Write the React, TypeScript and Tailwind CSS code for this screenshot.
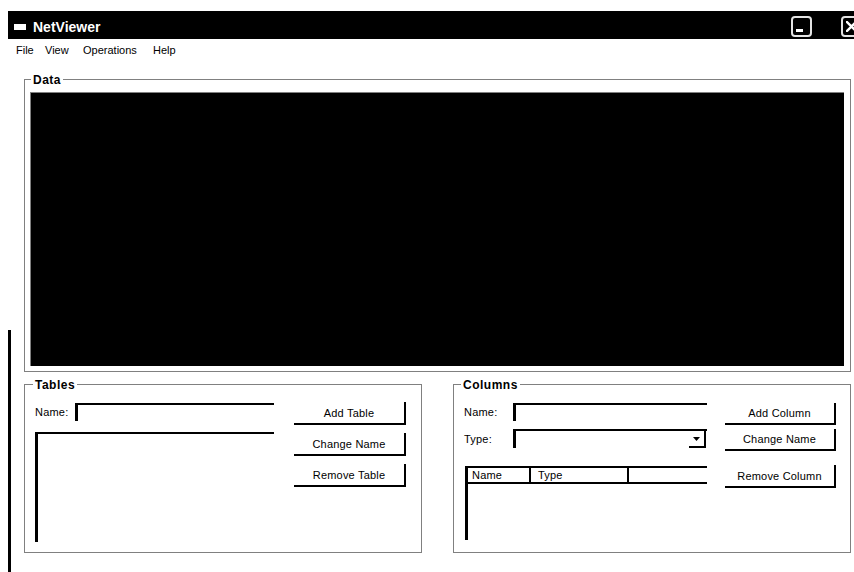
import React from "react";

type GroupProps = {
  title: string;
  className: string;
  labelClass: string;
  children: React.ReactNode;
};

function Group({ title, className, labelClass, children }: GroupProps) {
  return (
    <div className={`relative border border-[#808080] ${className}`}>
      <span
        className={`absolute top-[-7px] bg-white px-[2px] text-[12px] font-bold leading-[14px] tracking-[0.5px] text-black ${labelClass}`}
      >
        {title}
      </span>
      {children}
    </div>
  );
}

function RaisedButton({ label, className }: { label: string; className: string }) {
  return (
    <div
      className={`flex items-center justify-center border-r-2 border-b-2 border-black text-[11px] leading-[14px] tracking-[0.2px] text-black ${className}`}
    >
      {label}
    </div>
  );
}

function Field({ className }: { className: string }) {
  return <div className={`border-t-2 border-l-[3px] border-black bg-white ${className}`} />;
}

function TitleBar() {
  return (
    <div className="flex h-[28px] w-[854px] shrink-0 items-center bg-black pt-[4px]">
      <div className="ml-[6px] h-[6px] w-[12px] bg-white" />
      <span className="ml-[7px] text-[14px] font-bold leading-[16px] text-white">NetViewer</span>
      <div className="mb-[2px] ml-auto flex h-[21px] w-[21px] items-end self-end rounded-[4px] border-2 border-[#e4e4e4] pb-[3px] pl-[3px]">
        <div className="h-[3px] w-[7px] bg-white" />
      </div>
      <div className="mb-[2px] ml-[29px] flex h-[21px] w-[21px] shrink-0 items-center justify-center self-end rounded-[4px] border-2 border-[#e4e4e4]">
        <svg width="11" height="11" viewBox="0 0 11 11">
          <path d="M1 1 L10 10 M10 1 L1 10" stroke="white" strokeWidth="2.4" strokeLinecap="square" />
        </svg>
      </div>
    </div>
  );
}

function MenuBar() {
  return (
    <div className="flex h-[22px] items-center pl-[5px] text-[11px] leading-[14px] text-black">
      <span className="w-[29px]">File</span>
      <span className="w-[38px]">View</span>
      <span className="w-[70px]">Operations</span>
      <span>Help</span>
    </div>
  );
}

function TablesPanel() {
  return (
    <Group title="Tables" className="flex h-[169px] w-[398px] pt-[17px] pl-[10px]" labelClass="left-[8px]">
      <div className="flex flex-col pt-[1px]">
        <div className="flex h-[18px] items-center">
          <span className="w-[40px] text-[11px] leading-[14px] tracking-[0.2px] text-black">Name:</span>
          <Field className="h-[18px] w-[199px]" />
        </div>
        <Field className="mt-[11px] h-[110px] w-[239px]" />
      </div>
      <div className="ml-[20px] flex flex-col gap-[8px]">
        <RaisedButton label="Add Table" className="h-[23px] w-[112px]" />
        <RaisedButton label="Change Name" className="h-[23px] w-[112px]" />
        <RaisedButton label="Remove Table" className="h-[23px] w-[112px]" />
      </div>
    </Group>
  );
}

function ColumnsPanel() {
  return (
    <Group title="Columns" className="flex h-[169px] w-[398px] pt-[18px] pl-[10px]" labelClass="left-[7px]">
      <div className="flex flex-col">
        <div className="flex h-[18px] items-center">
          <span className="w-[49px] text-[11px] leading-[14px] tracking-[0.2px] text-black">Name:</span>
          <Field className="h-[18px] w-[194px]" />
        </div>
        <div className="mt-[8px] flex h-[19px] items-center">
          <span className="w-[49px] text-[11px] leading-[14px] tracking-[0.2px] text-black">Type:</span>
          <div className="flex h-[19px] w-[194px] justify-end border-t-2 border-l-[3px] border-black pr-[1px]">
            <div className="flex h-[17px] w-[17px] items-center justify-center border-r-2 border-b-2 border-black">
              <svg width="7" height="4" viewBox="0 0 7 4">
                <path d="M0 0 H7 L3.5 4 Z" fill="black" />
              </svg>
            </div>
          </div>
        </div>
        <div className="mt-[18px] ml-[1px] flex h-[74px] w-[242px] flex-col border-t-2 border-l-[3px] border-black">
          <div className="flex h-[16px] border-b-2 border-black text-[11px] leading-[14px] tracking-[0.2px] text-black">
            <div className="w-[63px] border-r-2 border-black pl-[4px]">Name</div>
            <div className="w-[98px] border-r-2 border-black pl-[7px]">Type</div>
            <div className="flex-1" />
          </div>
        </div>
      </div>
      <div className="ml-[18px] flex flex-col">
        <RaisedButton label="Add Column" className="h-[22px] w-[111px]" />
        <RaisedButton label="Change Name" className="mt-[4px] h-[22px] w-[111px]" />
        <RaisedButton label="Remove Column" className="mt-[14px] h-[23px] w-[111px]" />
      </div>
    </Group>
  );
}

export default function App() {
  return (
    <div className="flex h-[572px] w-[854px] flex-col overflow-hidden bg-white pt-[11px] pl-[8px] font-['Liberation_Sans',Arial,sans-serif]">
      <TitleBar />
      <div className="flex flex-1">
        {/* window frame edge */}
        <div className="flex w-[3px] flex-col">
          <div className="h-[291px]" />
          <div className="flex-1 bg-black" />
        </div>
        <div className="flex w-[843px] flex-col">
          <MenuBar />
          <Group
            title="Data"
            className="mt-[18px] ml-[13px] h-[293px] w-[827px] pt-[12px] pr-[6px] pb-[5px] pl-[5px]"
            labelClass="left-[6px]"
          >
            <div className="h-full w-full border-t border-l border-[#808080] bg-black" />
          </Group>
          <div className="mt-[12px] ml-[13px] flex gap-[31px]">
            <TablesPanel />
            <ColumnsPanel />
          </div>
        </div>
      </div>
    </div>
  );
}
